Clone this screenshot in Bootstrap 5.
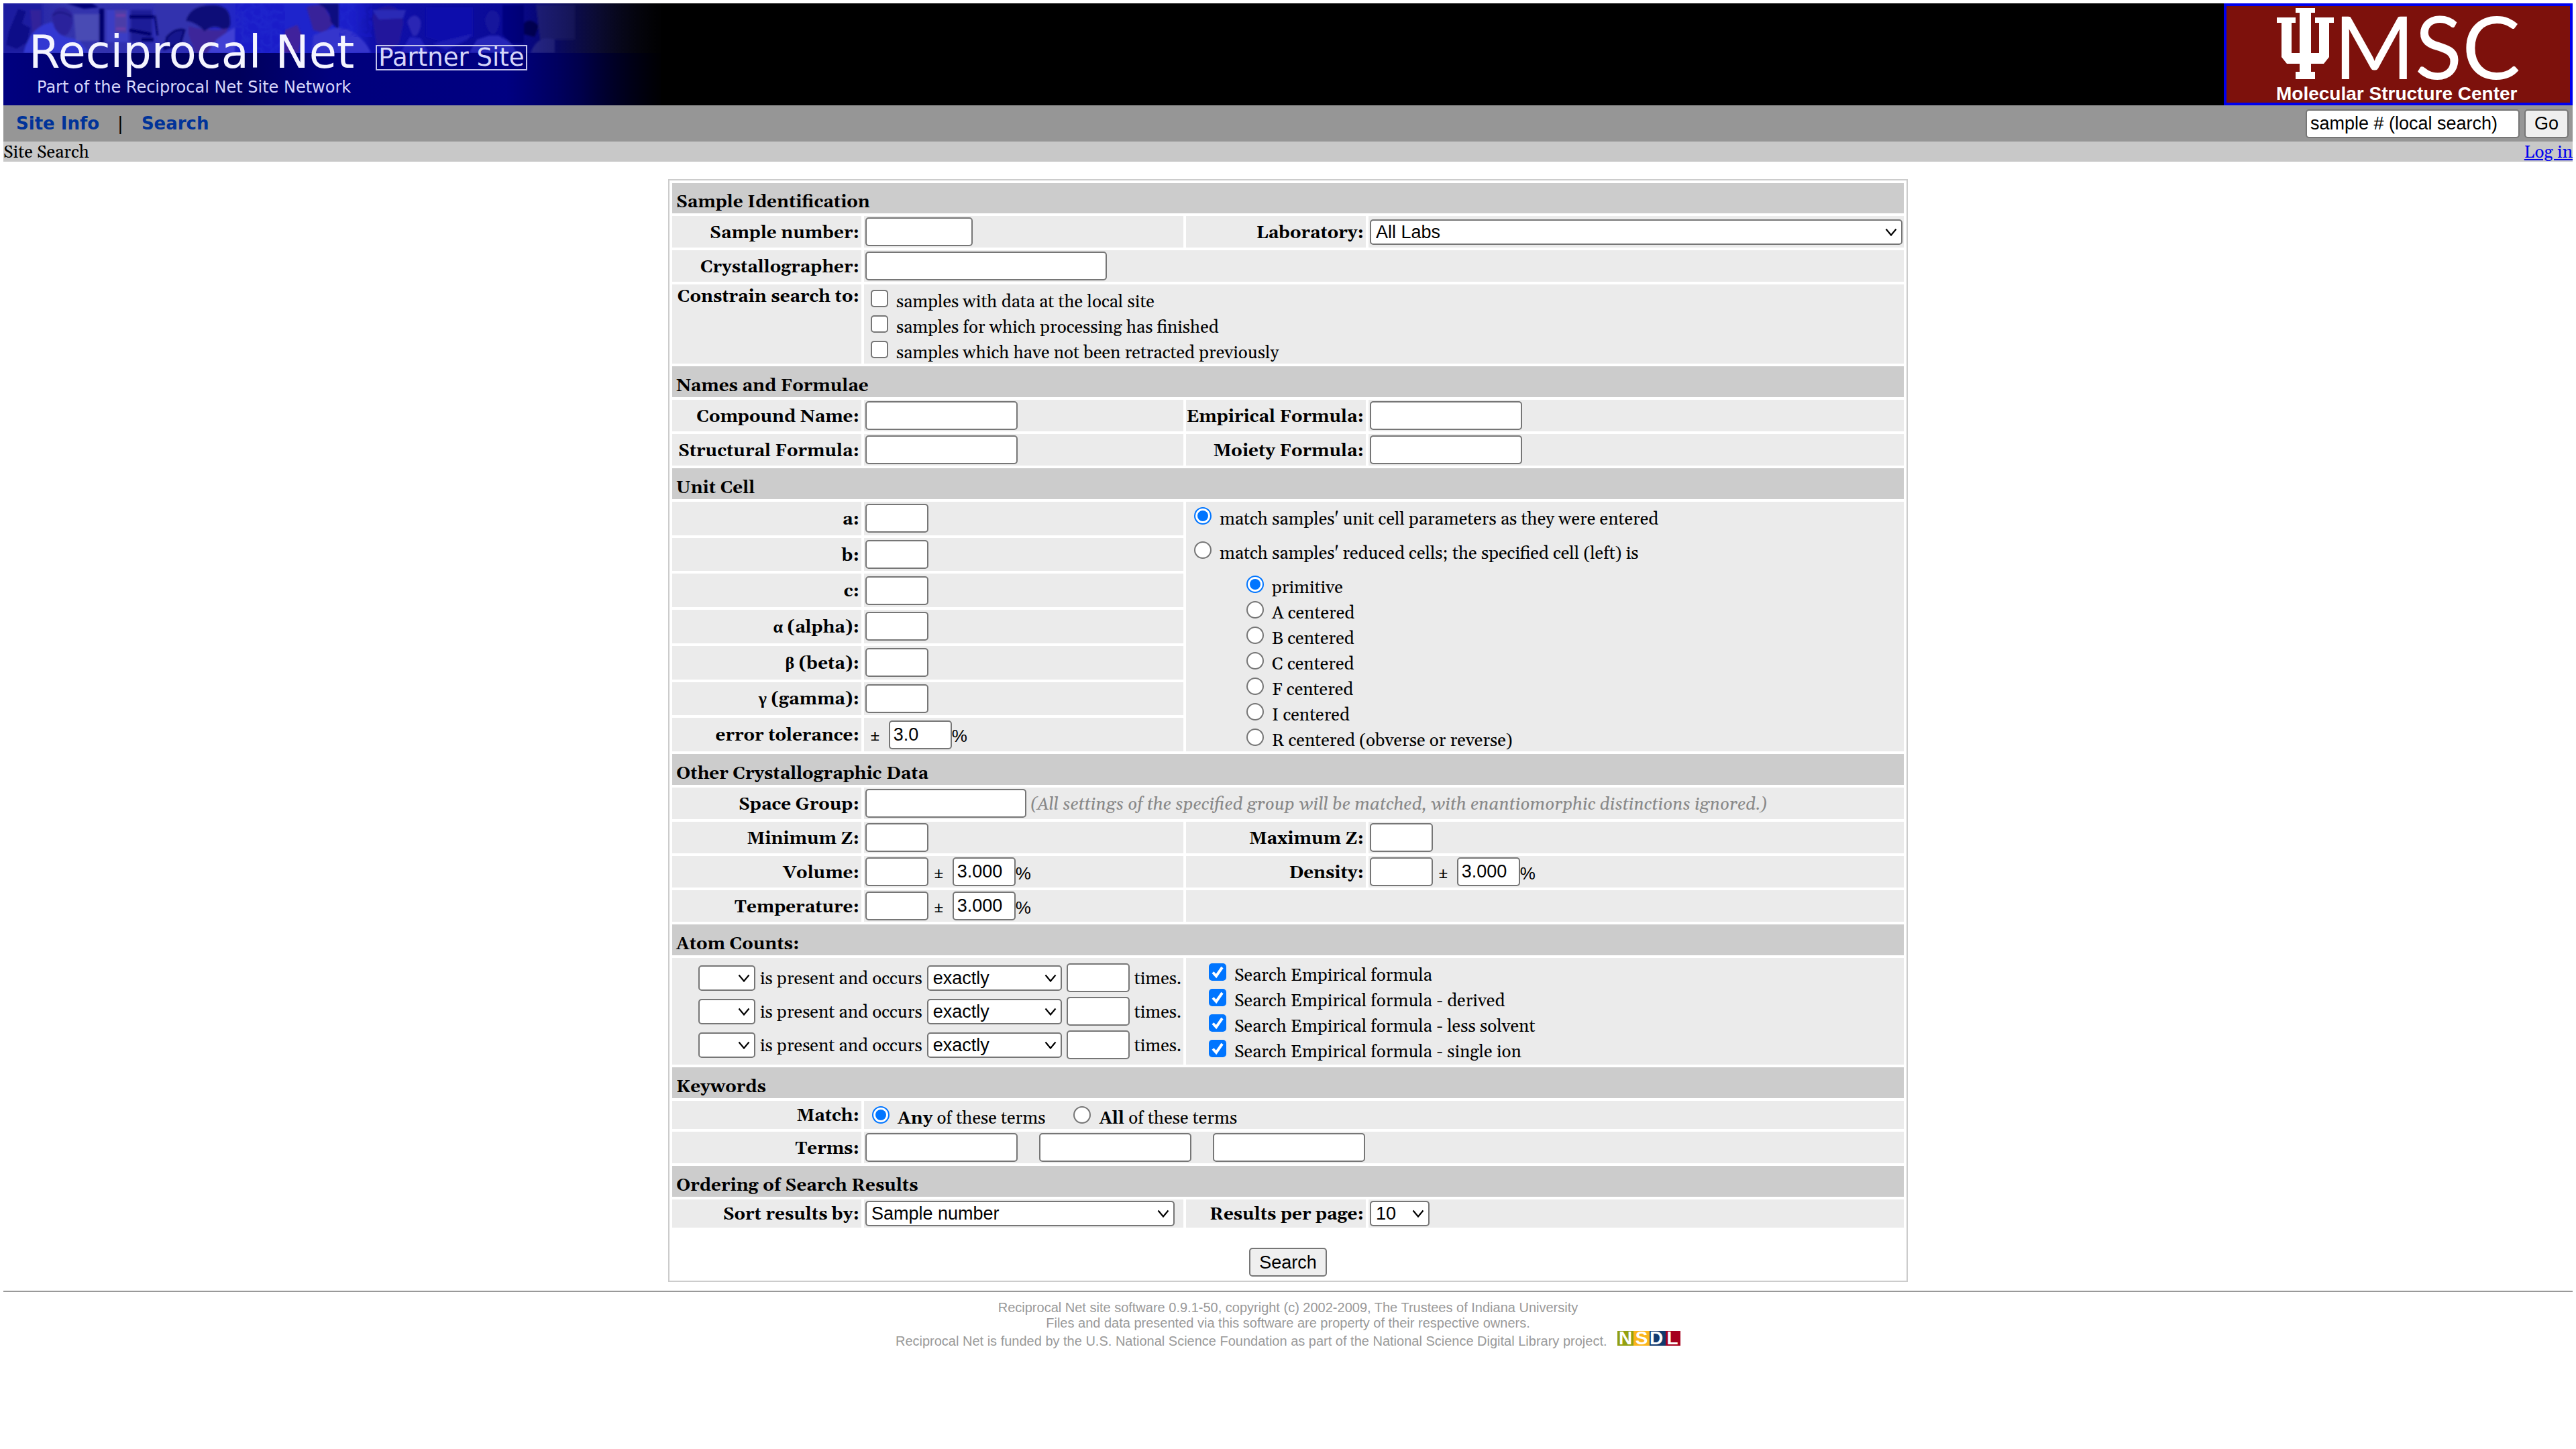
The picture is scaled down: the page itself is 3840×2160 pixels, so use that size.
<!DOCTYPE html>
<html lang="en">
<head>
<meta charset="utf-8">
<meta name="viewport" content="width=device-width, initial-scale=1">
<title>Reciprocal Net - Site Search</title>
<link href="https://cdn.jsdelivr.net/npm/bootstrap@5.3.0/dist/css/bootstrap.min.css" rel="stylesheet">
<style>
:root{--ui:"Liberation Sans",Arial,sans-serif;--text:Gelasio,Georgia,"Liberation Serif",serif;--verdana:"DejaVu Sans",Verdana,sans-serif}
body{padding:5px;background:#fff;color:#000;font-family:var(--text);font-size:26px;line-height:30px}
a.plain-link{color:#00e;text-decoration:underline}
/* banner */
.banner{background:#000;height:152px}
.banner svg{overflow:visible}
.brand-art{display:grid}
.brand-art>*{grid-area:1/1}
.brand-words{padding:39px 0 0 38px;font-family:var(--verdana);color:#fff}
.brand-title{font-size:67px;line-height:68px;font-weight:400;color:#f4f4ff}
.partner{margin-top:23px;padding:0 2px;border:2px solid #c4c4ec;font-size:37px;line-height:34px;height:38px;color:#d6d6fa}
.brand-sub{font-size:24px;line-height:28px;margin:4px 0 0 12px;color:#d6d6fa}
.brand-title-row{gap:32px}
/* menu */
.menu-bar{background:#969696;min-height:54px;padding:0 6px 0 19px;font-family:var(--verdana)}
.menu-links{gap:27px}
.menu-links a{font-weight:700;color:#039;text-decoration:none}
.jump{gap:7px}
.crumb-bar{background:#c8c8c8;height:30px;padding-top:2px}
/* controls */
.fld,.pick,.push{font-family:var(--ui);font-size:27px;color:#000;border:2px solid #767676;border-radius:5px;background-color:#fff;line-height:30px}
.fld{height:43px;padding:0 5px;min-width:0}
.pick{appearance:none;height:38px;padding:0 7px;background-repeat:no-repeat;background-position:right 6px center;background-size:18px 12px;background-image:url("data:image/svg+xml,%3Csvg xmlns='http://www.w3.org/2000/svg' viewBox='0 0 18 12'%3E%3Cpath d='M1.500 1.500L9 10.500L16.500 1.500' fill='none' stroke='%23000' stroke-width='2.200'/%3E%3C/svg%3E")}
.push{height:43px;padding:0 13px;background:#efefef}
.w-tiny{width:94px}.w-num{width:160px}.w-name{width:227px}.w-group{width:240px}.w-person{width:360px}.w-jump{width:319px}
.pick-atom{width:85px}.pick-how{width:201px}.pick-sort{width:461px}.pick-page{width:89px}
.opt{padding-left:8px;gap:12px}
.opt .form-check-input{width:26px;height:26px;margin:6px 0;border:2px solid #767676;background-color:#fff;flex:none}
.opt .form-check-input[type=checkbox]{border-radius:5px}
.opt .form-check-input:checked[type=checkbox]{background-color:#0075ff;border-color:#0075ff;background-size:26px 26px;background-image:url("data:image/svg+xml,%3Csvg xmlns='http://www.w3.org/2000/svg' viewBox='0 0 26 26'%3E%3Cpath d='M6 13.500L11 19L20 6' fill='none' stroke='%23fff' stroke-width='4'/%3E%3C/svg%3E")}
.opt .form-check-input:checked[type=radio]{background-color:#fff;border-color:#0075ff;background-size:26px 26px;background-image:url("data:image/svg+xml,%3Csvg xmlns='http://www.w3.org/2000/svg' viewBox='0 0 26 26'%3E%3Ccircle cx='13' cy='13' r='8' fill='%230075ff'/%3E%3C/svg%3E")}
.opt label{padding-top:12px;line-height:26px}
/* search sheet */
.sheet{max-width:1848px;margin:26px auto 13px;border:2px solid #ccc;padding:4px;display:grid;gap:4px;grid-template-columns:minmax(0,282fr) minmax(0,476fr) minmax(0,268fr) minmax(0,798fr)}
.sec{grid-column:1/-1;background:#ccc;font-weight:700;font-size:26px;line-height:30px;margin:0;padding:15px 6px 1px}
.sec:first-child{padding-top:14px}
.cell{background:#ebebeb;padding:2px;display:flex;align-items:center}
.lab{justify-content:flex-end;font-weight:700;padding:6px 3px 2px 0;white-space:nowrap}
.lab-top{align-items:flex-start;padding-top:4px}
.span3{grid-column:span 3}.span2{grid-column:span 2}
.stack{flex-direction:column;align-items:stretch}
.cellmodes{grid-column:3/5;grid-row:span 7;padding-left:4px}
.modegap{margin:13px 0}
.lattices{padding-left:78px}
.pm,.pm-first,.unit,.hint,.atom-row span{padding-top:4px}
.pm{padding-right:12px;padding-left:7px}
.pm-first{padding-right:12px;padding-left:6px}
.unit{font-family:var(--ui)}
.hint{color:#888;font-style:italic;padding-left:6px}
.atoms{padding:8px 3px 8px 2px;gap:7px}
.atom-row{gap:7px;justify-content:flex-end}
.sources{padding-left:26px}
.matches{gap:34px}
.matches .opt:first-child{padding-left:10px}
.terms{gap:32px}
.submit-row{grid-column:1/-1;padding:26px 0 2px}
.submit-row .push{vertical-align:top}
.foot{border-top:2px solid #999;padding-top:12px;font-family:var(--ui);font-size:20px;line-height:23px;color:#999;text-align:center}
.foot p{margin:0}
.foot svg{margin-left:10px;vertical-align:baseline}
</style>
<script src="https://cdn.jsdelivr.net/npm/bootstrap@5.3.0/dist/js/bootstrap.bundle.min.js"></script>
</head>
<body>
<header>
 <div class="banner d-flex justify-content-between">
  <div class="brand-art">
   <svg width="980" height="152" viewBox="0 0 980 152" aria-hidden="true">
    <defs>
     <linearGradient id="base" x1="0" x2="1" y1="0" y2="0"><stop offset="0" stop-color="#000080"/><stop offset=".2" stop-color="#000062"/><stop offset=".36" stop-color="#00005c"/><stop offset=".5" stop-color="#00007c"/><stop offset=".88" stop-color="#000084"/><stop offset="1" stop-color="#000050"/></linearGradient>
     <linearGradient id="photo" x1="0" x2="1" y1="0" y2="0"><stop offset="0" stop-color="#1a1aa4"/><stop offset=".1" stop-color="#3434ac"/><stop offset=".3" stop-color="#2c2cb6"/><stop offset=".37" stop-color="#1e24cc"/><stop offset=".53" stop-color="#1e24cc"/><stop offset=".56" stop-color="#1010ac"/><stop offset=".82" stop-color="#080890"/><stop offset=".9" stop-color="#181870"/><stop offset="1" stop-color="#141430"/></linearGradient>
     <linearGradient id="fade" x1="0" x2="1" y1="0" y2="0"><stop offset="0" stop-color="#000" stop-opacity="0"/><stop offset=".35" stop-color="#000" stop-opacity=".3"/><stop offset="1" stop-color="#000" stop-opacity=".97"/></linearGradient>
     <filter id="soft" x="-5%" y="-5%" width="110%" height="110%"><feGaussianBlur stdDeviation="1.500"/></filter>
     <filter id="cells" x="0" y="0" width="100%" height="100%"><feTurbulence type="turbulence" baseFrequency=".07" numOctaves="2" seed="4"/><feColorMatrix values="0 0 0 0 .01  0 0 0 0 .01  0 0 0 0 .58  3 0 0 0 -.2"/></filter>
     <clipPath id="strip"><rect width="980" height="74"/></clipPath>
    </defs>
    <rect width="980" height="152" fill="url(#base)"/>
    <g clip-path="url(#strip)">
     <rect width="980" height="74" fill="url(#photo)"/>
     <g filter="url(#soft)">
      <path d="M0 0H58V45L38 74H0Z" fill="#1c1aa0"/><path d="M22 8l12 4-6 18 12 6-4 22-16 10-16-6 4-20Z" fill="#0a0a88"/><path d="M40 10H56V42L44 50Z" fill="#33209a"/>
      <path d="M30 74Q40 34 72 28L92 50 112 54 128 74Z" fill="#3038d2"/>
      <path d="M72 20Q76 4 90 6Q106 10 103 30Q98 50 88 48Q76 42 74 28Z" fill="#2c229c"/><path d="M74 18Q84 8 102 20" stroke="#15157e" stroke-width="2" fill="none"/>
      <path d="M105 16H142V56H108Z" fill="#4a4cb4"/>
      <path d="M94 0H132L142 6 120 8Z" fill="#000078"/><path d="M143 8H150V62H143Z" fill="#00006c"/>
      <path d="M154 10H186V58H154Z" fill="#3a3cc4"/><path d="M166 10H184V44H166Z" fill="#4c3ca8"/><path d="M168 18H182M168 38H182" stroke="#6a3ca8" stroke-width="4"/>
      <path d="M190 10H222V58H190Z" fill="#1e1e98"/><path d="M188 20H224M188 40L220 46M206 54H224" stroke="#00006c" stroke-width="5"/>
      <path d="M224 0H300V60H232Z" fill="#3232ae"/><path d="M226 18L230 48M244 50Q258 36 270 40L264 60 240 68Z" stroke="#00006c" stroke-width="3" fill="#12128e"/>
      <path d="M276 46L276 34Q296 40 322 40L336 34 322 74H286Z" fill="#3c289a"/>
      <path d="M272 26Q278 4 306 3Q338 0 338 26Q340 40 326 38Q312 30 300 42Q288 28 272 26Z" fill="#0e0e78"/>
      <path d="M318 54Q340 38 345 36V74H304Z" fill="#4040d4"/>
      <path d="M420 40L438 32 445 48 440 74H412Z" fill="#40209c"/>
      <path d="M452 6Q462 0 478 4L492 30 478 44 462 40Z" fill="#38209a"/><path d="M468 0H500V40L488 28Q488 14 478 6Z" fill="#0a0a80"/>
      <path d="M462 48Q500 30 516 40Q540 54 548 74H460Z" fill="#3434cc"/>
      <path d="M550 20Q556 4 576 4Q596 8 596 30L590 60 572 72 556 60Z" fill="#24189c"/><path d="M550 10H600L596 22 560 24Z" fill="#2a2ab6"/>
      <path d="M602 28Q606 18 614 18Q624 22 622 34Q618 52 610 48Z" fill="#2a26b4"/><path d="M592 74L606 50 622 52 634 74Z" fill="#2222bc"/>
      <path d="M630 6H700V50L660 60 630 50Z" fill="#0c0cac"/>
      <path d="M718 24Q722 10 730 11Q742 14 739 30Q736 46 729 46Q720 40 718 24Z" fill="#18149c"/><path d="M694 74L706 54 724 48 738 48 756 58 766 74Z" fill="#2626b8"/>
      <path d="M640 60L698 46 692 54 660 70Z" fill="#1c1cb4"/>
      <path d="M744 2H776V60H756L744 46Z" fill="#060680"/><path d="M776 30Q786 20 798 34L792 50 776 46Z" fill="#04045c"/><path d="M794 2H852V54H800Z" fill="#22228c"/><path d="M786 74Q796 46 822 54V74Z" fill="#2c2c9c"/>
     </g>
     <rect x="346" width="74" height="74" filter="url(#cells)" opacity=".7"/><rect x="500" width="50" height="50" filter="url(#cells)" opacity=".5"/>
    </g>
    <rect x="750" width="230" height="152" fill="url(#fade)"/>
   </svg>
   <div class="brand-words">
    <div class="brand-title-row d-flex align-items-start"><h1 class="brand-title m-0">Reciprocal Net</h1><span class="partner">Partner Site</span></div>
    <p class="brand-sub mb-0">Part of the Reciprocal Net Site Network</p>
   </div>
  </div>
  <a href="#msc" aria-label="Molecular Structure Center">
   <svg class="d-block" width="520" height="152" viewBox="0 0 520 152">
    <rect width="520" height="152" fill="#00e"/><rect x="4" y="4" width="512" height="144" fill="#7d110c"/>
    <path fill="#fff" d="M107 7H136V14H130V74H142V29H136V21H164V29H157V80L149 90H130V102H136V113H107V102H113V90H94L86 80V29H79V21H107V29H101V74H113V14H107Z"/>
    <text x="164" y="113" font-family="Lato" font-size="130" fill="#fff">MSC</text>
    <text x="78" y="144" font-family="Liberation Sans" font-weight="700" font-size="28" fill="#fff">Molecular Structure Center</text>
   </svg>
  </a>
 </div>
 <nav class="menu-bar d-flex align-items-center justify-content-between">
  <div class="menu-links d-flex"><a href="#info">Site Info</a><span>|</span><a href="#search">Search</a></div>
  <form class="jump d-flex"><input class="fld w-jump" type="text" aria-label="Local sample number" value="sample # (local search)"><button class="push" type="button">Go</button></form>
 </nav>
 <div class="crumb-bar d-flex justify-content-between"><span>Site Search</span><a class="plain-link" href="#login">Log in</a></div>
</header>
<main>
<form class="sheet" id="search">
 <h2 class="sec">Sample Identification</h2>
 <label class="cell lab" for="num">Sample number:</label><div class="cell"><input class="fld w-num" id="num" type="text"></div>
 <label class="cell lab" for="lab">Laboratory:</label><div class="cell"><select class="pick w-100" id="lab"><option>All Labs</option></select></div>
 <label class="cell lab" for="cryst">Crystallographer:</label><div class="cell span3"><input class="fld w-person" id="cryst" type="text"></div>
 <div class="cell lab lab-top" id="constrain">Constrain search to:</div>
 <div class="cell span3 stack" role="group" aria-labelledby="constrain">
  <div class="opt d-flex"><input class="form-check-input" type="checkbox" id="c1"><label for="c1">samples with data at the local site</label></div>
  <div class="opt d-flex"><input class="form-check-input" type="checkbox" id="c2"><label for="c2">samples for which processing has finished</label></div>
  <div class="opt d-flex"><input class="form-check-input" type="checkbox" id="c3"><label for="c3">samples which have not been retracted previously</label></div>
 </div>

 <h2 class="sec">Names and Formulae</h2>
 <label class="cell lab" for="cn">Compound Name:</label><div class="cell"><input class="fld w-name" id="cn" type="text"></div>
 <label class="cell lab" for="ef">Empirical Formula:</label><div class="cell"><input class="fld w-name" id="ef" type="text"></div>
 <label class="cell lab" for="sf">Structural Formula:</label><div class="cell"><input class="fld w-name" id="sf" type="text"></div>
 <label class="cell lab" for="mf">Moiety Formula:</label><div class="cell"><input class="fld w-name" id="mf" type="text"></div>

 <h2 class="sec">Unit Cell</h2>
 <label class="cell lab" for="ua">a:</label><div class="cell"><input class="fld w-tiny" id="ua" type="text"></div>
 <div class="cell stack cellmodes">
  <div class="opt d-flex"><input class="form-check-input" type="radio" name="mode" id="m1" checked><label for="m1">match samples' unit cell parameters as they were entered</label></div>
  <div class="opt d-flex modegap"><input class="form-check-input" type="radio" name="mode" id="m2"><label for="m2">match samples' reduced cells; the specified cell (left) is</label></div>
  <div class="lattices">
   <div class="opt d-flex"><input class="form-check-input" type="radio" name="lat" id="l1" checked><label for="l1">primitive</label></div>
   <div class="opt d-flex"><input class="form-check-input" type="radio" name="lat" id="l2"><label for="l2">A centered</label></div>
   <div class="opt d-flex"><input class="form-check-input" type="radio" name="lat" id="l3"><label for="l3">B centered</label></div>
   <div class="opt d-flex"><input class="form-check-input" type="radio" name="lat" id="l4"><label for="l4">C centered</label></div>
   <div class="opt d-flex"><input class="form-check-input" type="radio" name="lat" id="l5"><label for="l5">F centered</label></div>
   <div class="opt d-flex"><input class="form-check-input" type="radio" name="lat" id="l6"><label for="l6">I centered</label></div>
   <div class="opt d-flex"><input class="form-check-input" type="radio" name="lat" id="l7"><label for="l7">R centered (obverse or reverse)</label></div>
  </div>
 </div>
 <label class="cell lab" for="ub">b:</label><div class="cell"><input class="fld w-tiny" id="ub" type="text"></div>
 <label class="cell lab" for="uc">c:</label><div class="cell"><input class="fld w-tiny" id="uc" type="text"></div>
 <label class="cell lab" for="ual">α (alpha):</label><div class="cell"><input class="fld w-tiny" id="ual" type="text"></div>
 <label class="cell lab" for="ube">β (beta):</label><div class="cell"><input class="fld w-tiny" id="ube" type="text"></div>
 <label class="cell lab" for="uga">γ (gamma):</label><div class="cell"><input class="fld w-tiny" id="uga" type="text"></div>
 <label class="cell lab" for="tol">error tolerance:</label><div class="cell"><span class="pm-first">±</span><input class="fld w-tiny" id="tol" type="text" value="3.0"><span class="unit">%</span></div>

 <h2 class="sec">Other Crystallographic Data</h2>
 <label class="cell lab" for="sg">Space Group:</label><div class="cell span3"><input class="fld w-group" id="sg" type="text"><span class="hint">(All settings of the specified group will be matched, with enantiomorphic distinctions ignored.)</span></div>
 <label class="cell lab" for="zmin">Minimum Z:</label><div class="cell"><input class="fld w-tiny" id="zmin" type="text"></div>
 <label class="cell lab" for="zmax">Maximum Z:</label><div class="cell"><input class="fld w-tiny" id="zmax" type="text"></div>
 <label class="cell lab" for="vol">Volume:</label><div class="cell"><input class="fld w-tiny" id="vol" type="text"><span class="pm">±</span><input class="fld w-tiny" type="text" aria-label="Volume tolerance" value="3.000"><span class="unit">%</span></div>
 <label class="cell lab" for="den">Density:</label><div class="cell"><input class="fld w-tiny" id="den" type="text"><span class="pm">±</span><input class="fld w-tiny" type="text" aria-label="Density tolerance" value="3.000"><span class="unit">%</span></div>
 <label class="cell lab" for="temp">Temperature:</label><div class="cell"><input class="fld w-tiny" id="temp" type="text"><span class="pm">±</span><input class="fld w-tiny" type="text" aria-label="Temperature tolerance" value="3.000"><span class="unit">%</span></div>
 <div class="cell span2"></div>

 <h2 class="sec">Atom Counts:</h2>
 <div class="cell span2 stack atoms">
  <div class="atom-row d-flex align-items-center"><select class="pick pick-atom" aria-label="Element 1"><option></option></select><span>is present and occurs</span><select class="pick pick-how" aria-label="Comparison 1"><option>exactly</option></select><input class="fld w-tiny" type="text" aria-label="Count 1"><span>times.</span></div>
  <div class="atom-row d-flex align-items-center"><select class="pick pick-atom" aria-label="Element 2"><option></option></select><span>is present and occurs</span><select class="pick pick-how" aria-label="Comparison 2"><option>exactly</option></select><input class="fld w-tiny" type="text" aria-label="Count 2"><span>times.</span></div>
  <div class="atom-row d-flex align-items-center"><select class="pick pick-atom" aria-label="Element 3"><option></option></select><span>is present and occurs</span><select class="pick pick-how" aria-label="Comparison 3"><option>exactly</option></select><input class="fld w-tiny" type="text" aria-label="Count 3"><span>times.</span></div>
 </div>
 <div class="cell span2 stack sources">
  <div class="opt d-flex"><input class="form-check-input" type="checkbox" id="s1" checked><label for="s1">Search Empirical formula</label></div>
  <div class="opt d-flex"><input class="form-check-input" type="checkbox" id="s2" checked><label for="s2">Search Empirical formula - derived</label></div>
  <div class="opt d-flex"><input class="form-check-input" type="checkbox" id="s3" checked><label for="s3">Search Empirical formula - less solvent</label></div>
  <div class="opt d-flex"><input class="form-check-input" type="checkbox" id="s4" checked><label for="s4">Search Empirical formula - single ion</label></div>
 </div>

 <h2 class="sec">Keywords</h2>
 <div class="cell lab" id="match">Match:</div>
 <div class="cell span3 matches" role="group" aria-labelledby="match">
  <div class="opt d-flex"><input class="form-check-input" type="radio" name="kw" id="k1" checked><label for="k1"><b>Any</b> of these terms</label></div>
  <div class="opt d-flex"><input class="form-check-input" type="radio" name="kw" id="k2"><label for="k2"><b>All</b> of these terms</label></div>
 </div>
 <label class="cell lab" for="t1">Terms:</label><div class="cell span3 terms"><input class="fld w-name" id="t1" type="text"><input class="fld w-name" type="text" aria-label="Second term"><input class="fld w-name" type="text" aria-label="Third term"></div>

 <h2 class="sec">Ordering of Search Results</h2>
 <label class="cell lab" for="sort">Sort results by:</label><div class="cell"><select class="pick pick-sort" id="sort"><option>Sample number</option></select></div>
 <label class="cell lab" for="page">Results per page:</label><div class="cell"><select class="pick pick-page" id="page"><option>10</option></select></div>
 <div class="submit-row text-center"><button class="push" type="button">Search</button></div>
</form>
</main>
<footer class="foot">
 <p>Reciprocal Net site software 0.9.1-50, copyright (c) 2002-2009, The Trustees of Indiana University</p>
 <p>Files and data presented via this software are property of their respective owners.</p>
 <p>Reciprocal Net is funded by the U.S. National Science Foundation as part of the National Science Digital Library project.
  <svg width="94" height="22" viewBox="0 0 94 22" overflow="visible" role="img" aria-label="NSDL"><rect width="24" height="22" fill="#93a010"/><rect x="24" width="24" height="22" fill="#fbb51c"/><rect x="48" width="24" height="22" fill="#123a6e"/><rect x="72" width="22" height="22" fill="#a6001e"/><g font-family="Liberation Sans" font-weight="700" font-size="28" fill="#fff" text-anchor="middle"><text x="12" y="20">N</text><text x="36" y="20">S</text><text x="58" y="20">D</text><text x="82" y="20">L</text></g></svg></p>
</footer>
</body>
</html>
